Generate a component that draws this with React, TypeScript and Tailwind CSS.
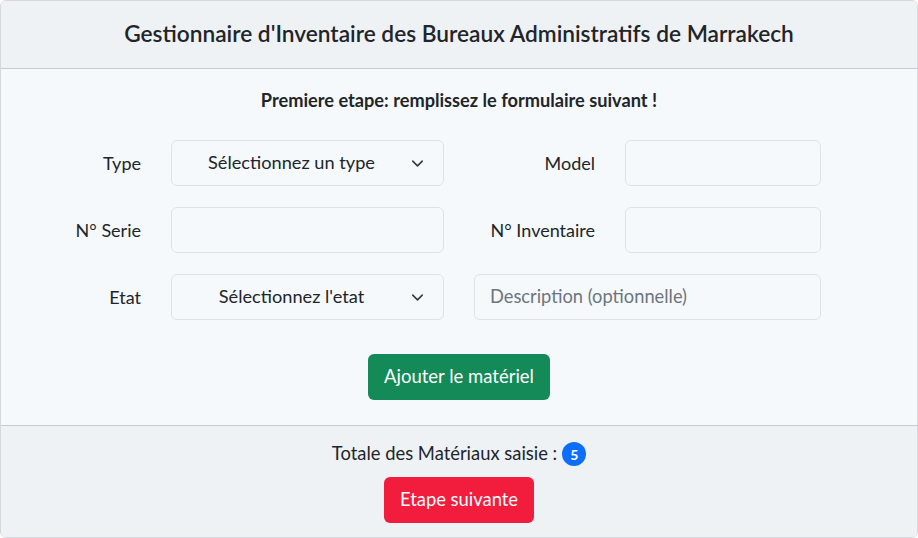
import React from 'react';
import { ChevronDown } from 'lucide-react';

const Select: React.FC<{ label: string }> = ({ label }) => (
  <div className="relative flex h-[46px] items-center justify-center rounded-md border border-[#dee2e6] bg-[#f5f9fc] pr-[32px] text-[18.2px] text-[#212529]">
    <span>{label}</span>
    <ChevronDown size={19} strokeWidth={2} className="absolute right-[16px] top-[13px] text-[#343a40]" />
  </div>
);

const Input: React.FC<{ placeholder?: string }> = ({ placeholder }) => (
  <div className="flex h-[46px] items-center rounded-md border border-[#dee2e6] bg-[#f5f9fc] px-[15px] text-[18.3px] text-[#6c757d]">
    {placeholder}
  </div>
);

const App: React.FC = () => {
  return (
    <div className="h-[538px] w-[918px] overflow-hidden font-['Lato',sans-serif] text-[#212529]">
      <div className="flex h-full flex-col overflow-hidden rounded-md border border-[#d5d9dd]">
        {/* Header */}
        <div className="flex h-[68px] items-center justify-center border-b border-[#c6cbd0] bg-[#eff2f5]">
          <h1 className="text-[22.7px] font-semibold">
            Gestionnaire d'Inventaire des Bureaux Administratifs de Marrakech
          </h1>
        </div>

        {/* Body */}
        <div className="flex h-[357px] flex-col items-center border-b border-[#c6cbd0] bg-[#f5f9fc]">
          <p className="mt-[19px] h-[24px] text-[18.2px] font-bold leading-[24px]">
            Premiere etape: remplissez le formulaire suivant !
          </p>

          <div className="mt-[28px] grid w-full grid-cols-[111px_273px_121px_196px] gap-x-[30px] gap-y-[21px] pl-[29px] text-[18px]">
            <div className="flex items-center justify-end">Type</div>
            <Select label="Sélectionnez un type" />
            <div className="flex items-center justify-end">Model</div>
            <Input />

            <div className="flex items-center justify-end">N° Serie</div>
            <Input />
            <div className="flex items-center justify-end">N° Inventaire</div>
            <Input />

            <div className="flex items-center justify-end">Etat</div>
            <Select label="Sélectionnez l'etat" />
            <div className="col-span-2">
              <Input placeholder="Description (optionnelle)" />
            </div>
          </div>

          <button className="mt-[34px] h-[46px] rounded-md bg-[#138a57] px-[16px] text-[18.5px] text-white">
            Ajouter le matériel
          </button>
        </div>

        {/* Footer */}
        <div className="flex flex-1 flex-col items-center bg-[#eff2f5]">
          <div className="mt-[16px] flex h-[24px] items-center gap-[5px] text-[18.4px]">
            <span>Totale des Matériaux saisie :</span>
            <span className="flex h-[24px] w-[24px] items-center justify-center rounded-full bg-[#0d6efd] text-[14px] font-bold text-white">
              5
            </span>
          </div>
          <button className="mt-[11px] h-[46px] rounded-md bg-[#f21c3c] px-[16px] text-[18.4px] text-white">
            Etape suivante
          </button>
        </div>
      </div>
    </div>
  );
};

export default App;
